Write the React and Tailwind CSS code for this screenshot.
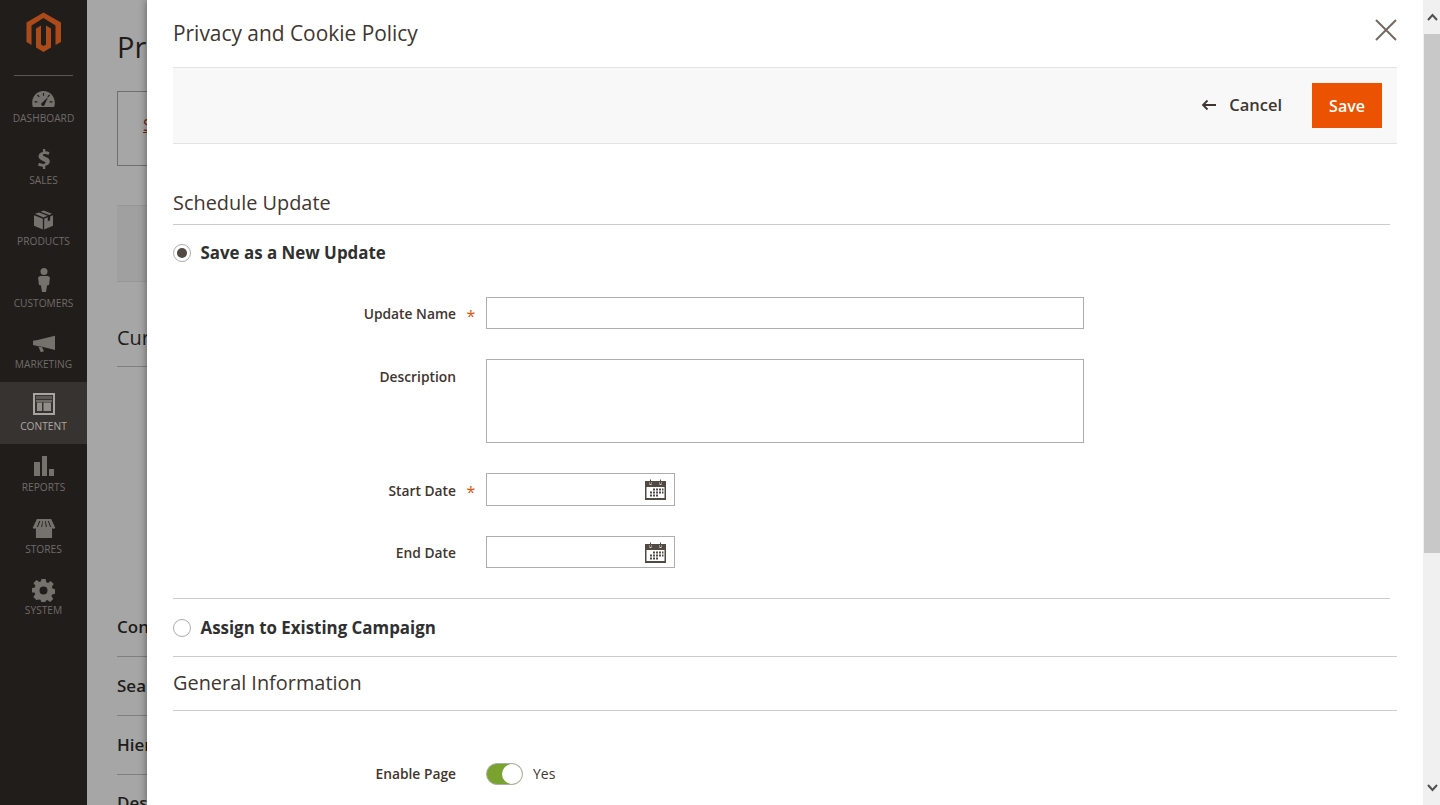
const NAV_ITEMS = [
    { label: 'DASHBOARD', icon: GaugeIcon },
    { label: 'SALES', icon: DollarIcon },
    { label: 'PRODUCTS', icon: BoxIcon },
    { label: 'CUSTOMERS', icon: PersonIcon },
    { label: 'MARKETING', icon: MegaphoneIcon },
    { label: 'CONTENT', icon: LayoutIcon, active: true },
    { label: 'REPORTS', icon: BarsIcon },
    { label: 'STORES', icon: StoreIcon },
    { label: 'SYSTEM', icon: GearIcon },
];

function Logo() {
    return (
        <svg width="36" height="41" viewBox="0 0 36 41" className="fill-[#ad4a1a]">
            <polygon points="17.5,0.5 0.5,10.5 0.5,30 5.5,33 5.5,13.5 17.5,6 29.5,13.5 29.5,33 35,30 35,10.5" />
            <polygon points="10,16.5 15,13.5 15,32.5 17.5,34 20,32.5 20,13.5 25,16.5 25,35.5 17.5,40 10,35.5" />
        </svg>
    );
}

function GaugeIcon({ className }) {
    return (
        <svg width="23" height="16" viewBox="0 0 24 17" className={className}>
            <path fillRule="evenodd" d="M12 0C5 0 0 5.500 0 12.500c0 1.800.3 3.500.8 4.500h22.400c.5-1 .8-2.700.8-4.500C24 5.500 19 0 12 0zM11.400 2h1.200v3h-1.200zM5 4.500l1-.9 2 2.200-1 .9zM19 4.500l-1-.9-2 2.200 1 .9zM2.500 11h3v1.200h-3zM18.500 11h3v1.200h-3zM17 6.500l-3.500 7.200a2 2 0 1 1-2.800-1.600z" />
        </svg>
    );
}

function DollarIcon({ className }) {
    return (
        <svg width="14" height="20" viewBox="0 0 14 22" className={className}>
            <path d="M5.800 0h2.600v2.500c1.800.1 3.300.5 4.600 1.100l-1 3c-1.400-.6-2.800-1-4.200-1-1.400 0-2 .4-2 1.100 0 .8.900 1.200 3 2 3 1.100 4.600 2.500 4.600 5 0 2.500-1.800 4.300-5 4.700V22H5.800v-2.500C3.800 19.400 1.800 19 .5 18.200l1-3.100c1.500.8 3.300 1.300 4.800 1.300 1.500 0 2.300-.5 2.300-1.300 0-.8-.8-1.300-2.800-2C2.900 12 1 10.700 1 8.100c0-2.500 1.800-4.300 4.800-4.800z" />
        </svg>
    );
}

function BoxIcon({ className }) {
    return (
        <svg width="19" height="20" viewBox="0 0 20 20" className={className}>
            <path d="M10 0l9 3.500-3 1.300-9-3.600zM5.300 2l9 3.600L10 7.300 1 3.500zM0 5l9.300 3.800V20L0 16zM20 5v11l-9.300 4V8.800l3.800-1.600v4l2.500-1V6.200z" />
        </svg>
    );
}

function PersonIcon({ className }) {
    return (
        <svg width="12" height="24" viewBox="0 0 12 24" className={className}>
            <circle cx="6" cy="3.500" r="3.500" />
            <path d="M2 8h8l2 1.500-1 7.500-2 .5-1 6.500H4L3 17.500 1 17 0 9.500z" />
        </svg>
    );
}

function MegaphoneIcon({ className }) {
    return (
        <svg width="22" height="18" viewBox="0 0 24 18" className={className}>
            <path d="M24 0v15.500L10 12 5.500 11.500 0 10V5.500L5 4.500z" />
            <path d="M6 12l4 .6 2 4.400-3.500 1z" />
        </svg>
    );
}

function LayoutIcon({ className }) {
    return (
        <svg width="22" height="22" viewBox="0 0 22 22" className={className}>
            <path fillRule="evenodd" d="M0 0h22v22H0zM2 2v18h18V2z" />
            <path d="M3 3h16v3H3z" opacity=".35" />
            <path d="M3 7.500h16v1H3z" />
            <path d="M4 9.500h5V18H4zM10.500 9.500H18V18h-7.500z" opacity=".8" />
        </svg>
    );
}

function BarsIcon({ className }) {
    return (
        <svg width="20" height="20" viewBox="0 0 20 20" className={className}>
            <path d="M0 6h6v14H0zM8 0h5v20H8zM15 13h5v7h-5z" />
        </svg>
    );
}

function StoreIcon({ className }) {
    return (
        <svg width="24" height="19" viewBox="0 0 24 20" className={className}>
            <path fillRule="evenodd" d="M4.500 0h15l4.500 9.500c-1 .8-2.300 1-3.500.3V20H3.500V9.800C2.300 10.500 1 10.300 0 9.500zM7 2L4.500 8.500h1L8.200 2zM10.500 2L9 8.500h1L11 2zM13 2l1 6.500h1L13.800 2zM16 2l2.500 6.500h1L17 2z" />
        </svg>
    );
}

function GearIcon({ className }) {
    return (
        <svg width="23" height="23" viewBox="0 0 23 23" className={`-mb-[3px] ${className}`}>
            <path fillRule="evenodd" d="M9.300 0h4.400l.6 3.200 1.700.7L18.700 2l3 3-1.900 2.700.7 1.700 2.500.9v4.400l-2.900.7-.7 1.700 1.800 2.800-3 3-2.800-1.900-1.700.7-.6 2.200H9.300l-.6-2.800-1.700-.7L4.300 21l-3-3 1.900-2.700-.7-1.700L0 13.400V9.300l2.700-.8.7-1.700-1.900-2.800 3-3 2.800 1.900 1.700-.7zM11.500 7.500a4 4 0 1 0 0 8 4 4 0 0 0 0-8z" />
        </svg>
    );
}

function CalendarIcon() {
    return (
        <svg width="21" height="21" viewBox="0 0 21 21" className="fill-[#514943]">
            <path fillRule="evenodd" d="M0 2h21v19H0zM1.500 8v11h18V8z" />
            <path d="M4.500 3h2v3h-2zM14.500 3h2v3h-2z" fill="#d8d4d0" />
            <path d="M5 0.500h1v4.500H5zM15 0.500h1v4.500h-1z" />
            <path d="M8 9.500h2v2H8zM11 9.500h2v2h-2zM14 9.500h2v2h-2zM17 9.500h1.500v2H17zM5 12.500h2v2H5zM8 12.500h2v2H8zM11 12.500h2v2h-2zM14 12.500h2v2h-2zM17 12.500h1.500v2H17zM5 15.500h2v2H5zM8 15.500h2v2H8zM11 15.500h2v2h-2z" />
        </svg>
    );
}

function Sidebar() {
    return (
        <aside className="w-[87px] h-full shrink-0 bg-[#211d1b] flex flex-col">
            <div className="h-[74.5px] shrink-0 flex flex-col items-center">
                <div className="mt-[12px]"><Logo /></div>
                <div className="mt-auto -mb-[1px] w-[59px] border-b border-[#5a5653]" />
            </div>
            {NAV_ITEMS.map(({ label, icon: Icon, active }) => (
                <div
                    key={label}
                    className={`h-[61.5px] shrink-0 flex flex-col items-center justify-end pb-[11px] ${active ? 'bg-[#373330]' : ''}`}
                >
                    <div className="flex-1 flex items-end justify-center pb-[4px]">
                        <Icon className={active ? 'fill-[#a8a49f]' : 'fill-[#75716d]'} />
                    </div>
                    <span className={`text-[10.2px] leading-[14px] ${active ? 'text-[#ada9a5]' : 'text-[#6f6b68]'}`}>{label}</span>
                </div>
            ))}
        </aside>
    );
}

// only the slice of the page left of the modal shows, so only those letters are here
function BackgroundPage() {
    return (
        <main className="w-[60px] h-full shrink-0 overflow-hidden bg-[#a6a6a6] text-[#201c19]">
            <div className="w-[400px] pl-[30px]">
                <div className="h-[91px] pt-[27px] text-[29px] leading-[40px]">Pr</div>
                <div className="h-[75px] border border-[#6f6f6f] pl-[25px] pt-[21px] text-[16px] text-[#6e2a10] underline">S</div>
                <div className="h-[77px] mt-[39px] bg-[#a0a0a0] border-y border-[#979797]" />
                <div className="h-[84.5px] pt-[42px] text-[20px] leading-[28px] border-b border-[#7f7f7f]">Cur</div>
                <div className="h-[289.5px] flex items-end pb-[18px] font-semibold text-[17px] leading-[22px]">Con</div>
                <div className="h-[60px] border-y border-[#7f7f7f] pt-[18px] font-semibold text-[17px] leading-[22px]">Sea</div>
                <div className="h-[59px] border-b border-[#7f7f7f] pt-[18px] font-semibold text-[17px] leading-[22px]">Hier</div>
                <div className="pt-[17px] font-semibold text-[17px] leading-[22px]">Des</div>
            </div>
        </main>
    );
}

function Radio({ checked }) {
    return (
        <span className="w-[18px] h-[18px] rounded-full border border-[#adadad] bg-white flex items-center justify-center shrink-0">
            {checked && <span className="w-[10px] h-[10px] rounded-full bg-[#514943]" />}
        </span>
    );
}

function Field({ label, required, rowClass, labelClass, children }) {
    return (
        <div className={`flex ${rowClass}`}>
            <div className={`w-[283px] shrink-0 text-right text-[13.8px] font-semibold leading-[20px] ${labelClass}`}>{label}</div>
            <div className="w-[30px] shrink-0 text-center text-[#eb5202] text-[16px] leading-[20px] pt-[9px]">{required ? '*' : ''}</div>
            {children}
        </div>
    );
}

function DateInput({ className }) {
    return (
        <div className={`w-[189px] border border-[#adadad] bg-white flex items-center justify-end pr-[8px] ${className}`}>
            <CalendarIcon />
        </div>
    );
}

function Modal() {
    return (
        <section className="relative z-10 flex-1 h-full bg-white overflow-hidden pl-[26px] pr-[26px] shadow-[0_0_8px_rgba(0,0,0,0.45)] text-[#41362f]">
            <header className="h-[67px] flex items-start justify-between">
                <h1 className="text-[20.9px] leading-[29px] mt-[19px]">Privacy and Cookie Policy</h1>
                <svg width="22" height="22" viewBox="0 0 22 22" className="mt-[19px] stroke-[#736963]" strokeWidth="2" fill="none">
                    <path d="M1 1l20 20M21 1L1 21" />
                </svg>
            </header>

            <div className="h-[77px] bg-[#f8f8f8] border-y border-[#e3e3e3] flex items-center justify-end pr-[15px]">
                <svg width="16" height="12" viewBox="0 0 16 12" className="stroke-[#41362f] mr-[12px] -mt-[2px]" strokeWidth="1.8" fill="none">
                    <path d="M15 6H2M6.500 1.500L2 6l4.500 4.500" />
                </svg>
                <span className="text-[16.5px] font-semibold mr-[30px] pb-[1px]">Cancel</span>
                <button className="w-[70px] h-[45px] bg-[#eb5202] text-white text-[16px] font-semibold">Save</button>
            </div>

            <div className="w-[1217px]">
                <h2 className="mt-[45px] text-[19.9px] leading-[28px] pb-[7px] border-b border-[#cccccc]">Schedule Update</h2>
                <label className="flex items-center gap-[9.5px] mt-[14px] h-[28px]">
                    <Radio checked />
                    <span className="text-[16.9px] font-bold text-[#303030]">Save as a New Update</span>
                </label>

                <Field label="Update Name" required rowClass="mt-[30px]" labelClass="pt-[7px]">
                    <div className="w-[598px] h-[32px] border border-[#adadad] bg-white" />
                </Field>
                <Field label="Description" rowClass="mt-[30px]" labelClass="pt-[8px]">
                    <div className="w-[598px] h-[84px] border border-[#adadad] bg-white" />
                </Field>
                <Field label="Start Date" required rowClass="mt-[30px]" labelClass="pt-[8px]">
                    <DateInput className="h-[33px]" />
                </Field>
                <Field label="End Date" rowClass="mt-[30px]" labelClass="pt-[7px]">
                    <DateInput className="h-[32px]" />
                </Field>

                <label className="flex items-center gap-[9.5px] mt-[30px] h-[58px] border-t border-[#cccccc]">
                    <Radio />
                    <span className="text-[16.9px] font-bold text-[#303030]">Assign to Existing Campaign</span>
                </label>
            </div>

            <h2 className="h-[55px] border-y border-[#cccccc] text-[19.9px] leading-[28px] pt-[12px]">General Information</h2>

            <div className="flex items-center mt-[52px] h-[22px]">
                <div className="w-[283px] shrink-0 text-right text-[13.8px] font-semibold">Enable Page</div>
                <div className="w-[30px] shrink-0" />
                <span className="relative w-[37px] h-[22px] rounded-full bg-[#79a22e] border border-[#adadad]">
                    <span className="absolute right-0 top-0 w-[20px] h-[20px] rounded-full bg-white" />
                </span>
                <span className="ml-[10px] text-[14px] pb-[2px]">Yes</span>
            </div>
        </section>
    );
}

function Scrollbar() {
    return (
        <div className="w-[17px] h-full shrink-0 relative z-20 bg-[#f0f0f0] flex flex-col pl-[1px]">
            <div className="h-[34px] shrink-0 flex items-center justify-center">
                <svg width="11" height="8" viewBox="0 0 11 8" className="stroke-[#505050]" strokeWidth="2" fill="none"><path d="M1 7l4.500-5L10 7" /></svg>
            </div>
            <div className="h-[519px] shrink-0 bg-[#c8c8c8]" />
            <div className="flex-1 flex items-end justify-center pb-[13px]">
                <svg width="11" height="8" viewBox="0 0 11 8" className="stroke-[#505050]" strokeWidth="2" fill="none"><path d="M1 1l4.500 5L10 1" /></svg>
            </div>
        </div>
    );
}

export default function App() {
    return (
        <div className="w-[1440px] h-[805px] flex overflow-hidden font-['Open_Sans',sans-serif]">
            <Sidebar />
            <BackgroundPage />
            <Modal />
            <Scrollbar />
        </div>
    );
}
